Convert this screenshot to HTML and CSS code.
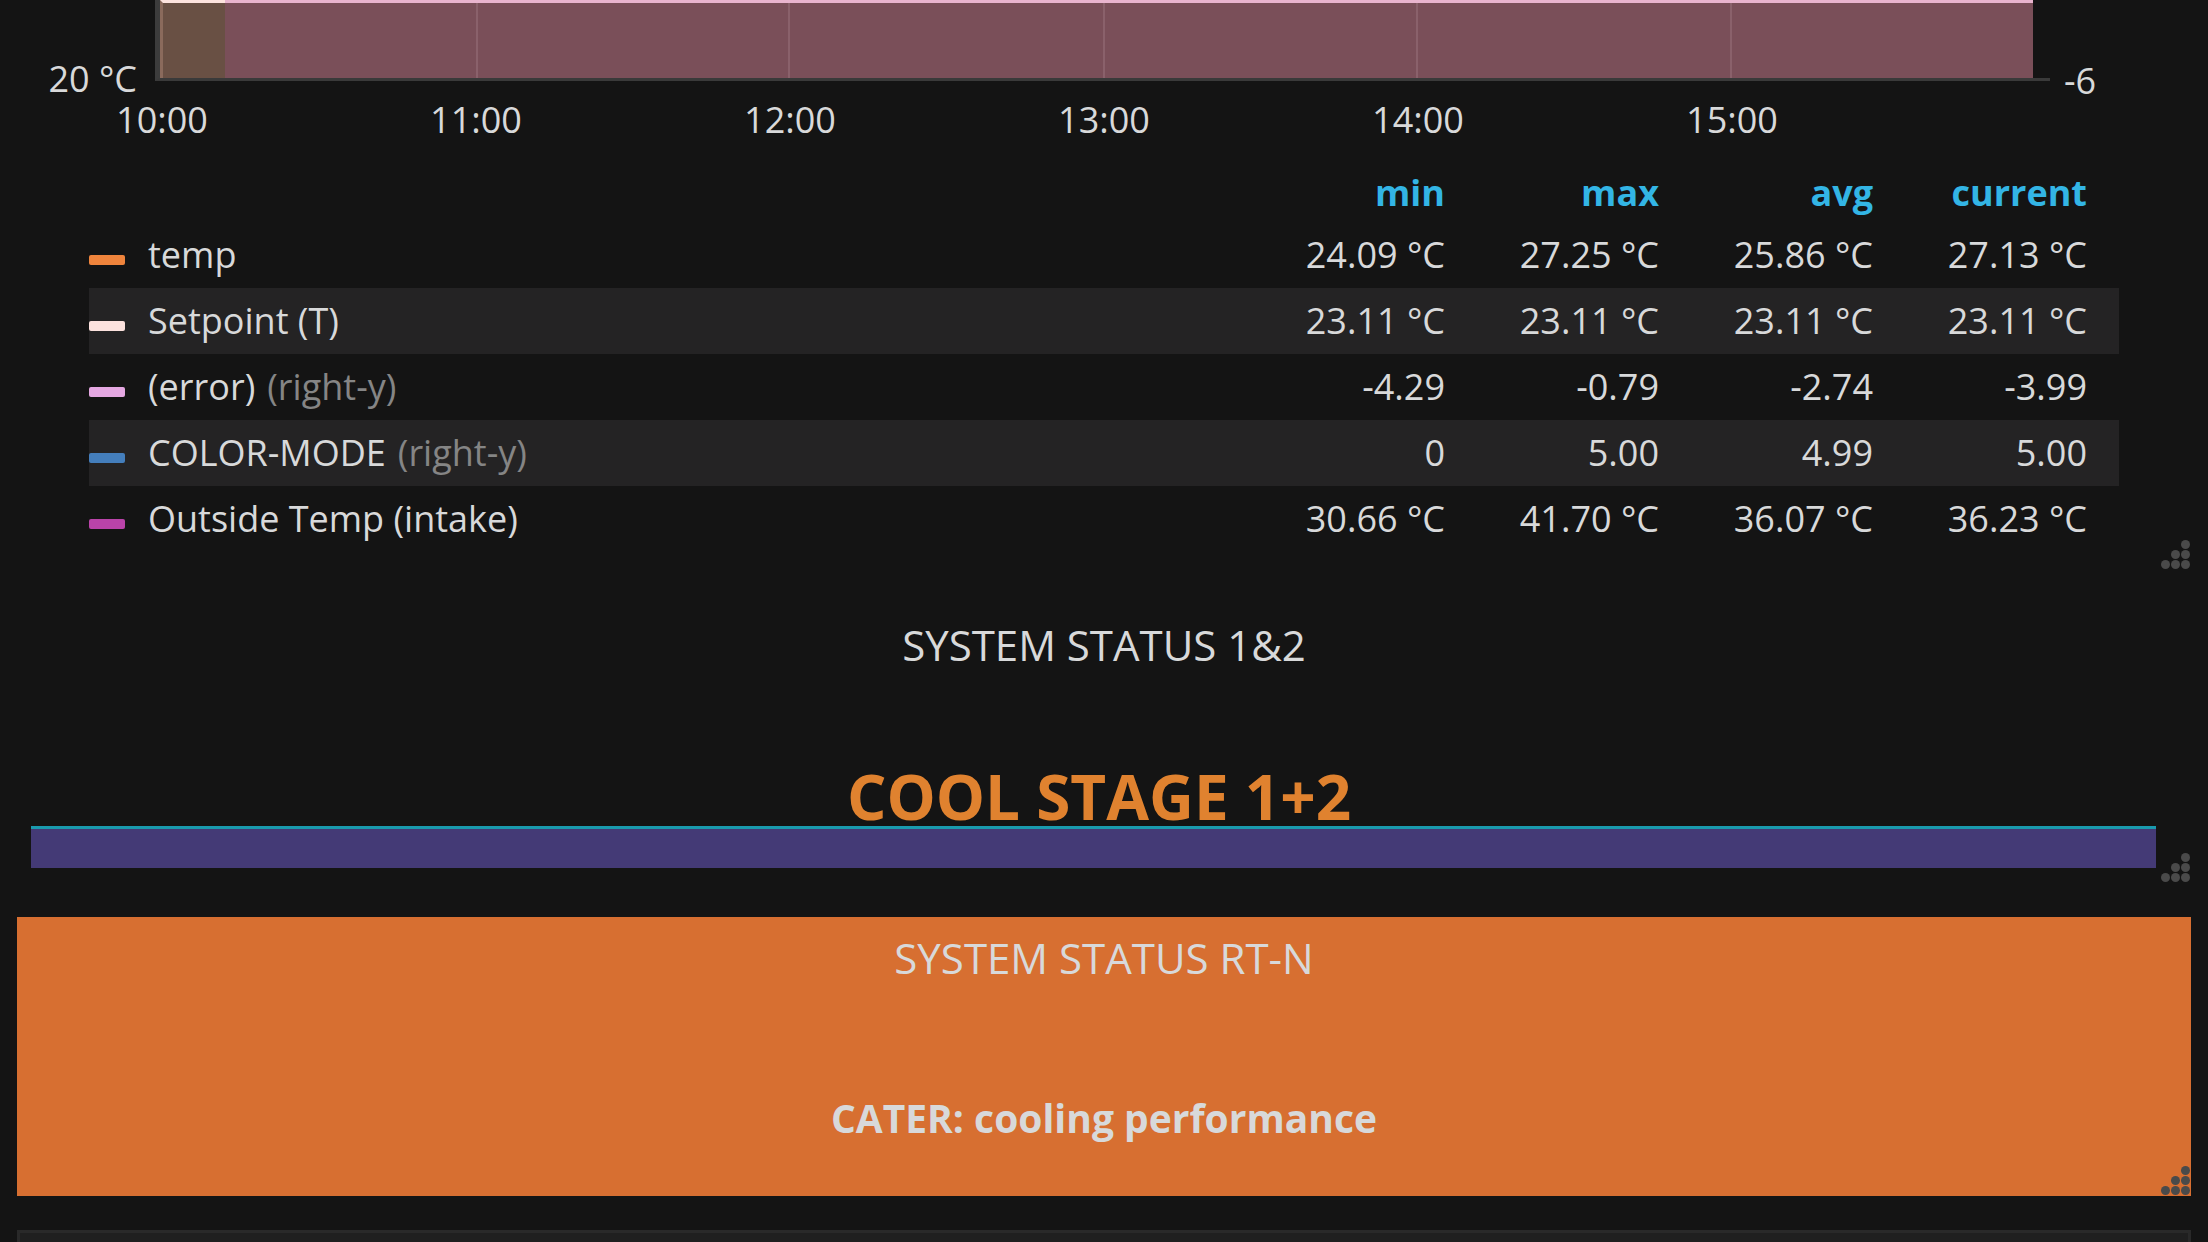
FILE: index.html
```html
<!DOCTYPE html>
<html lang="en">
<head>
<meta charset="utf-8">
<title>Dashboard</title>
<link rel="stylesheet" href="styles.css">
</head>
<body>
<div class="dashboard">
  <section class="panel graph-panel">
    <div class="graph">
      <div class="y-axis y-left">20 °C</div>
      <div class="plot">
        <div class="seg seg-setpoint"></div>
        <div class="seg seg-error"></div>
        <span class="gridline" style="left:316px"></span>
        <span class="gridline" style="left:628px"></span>
        <span class="gridline" style="left:943px"></span>
        <span class="gridline" style="left:1256px"></span>
        <span class="gridline" style="left:1570px"></span>
      </div>
      <div class="tick"></div>
      <div class="y-axis y-right">-6</div>
    </div>
    <div class="x-axis">
      <span>10:00</span><span>11:00</span><span>12:00</span><span>13:00</span><span>14:00</span><span>15:00</span>
    </div>
    <div class="legend">
      <div class="lg-row lg-head"><span></span><span>min</span><span>max</span><span>avg</span><span>current</span></div>
      <div class="lg-row">
        <span class="lg-name"><i class="swatch sw-temp"></i>temp</span>
        <span>24.09 °C</span><span>27.25 °C</span><span>25.86 °C</span><span>27.13 °C</span>
      </div>
      <div class="lg-row alt">
        <span class="lg-name"><i class="swatch sw-setpoint"></i>Setpoint (T)</span>
        <span>23.11 °C</span><span>23.11 °C</span><span>23.11 °C</span><span>23.11 °C</span>
      </div>
      <div class="lg-row">
        <span class="lg-name"><i class="swatch sw-error"></i>(error)<em class="axis-note">(right-y)</em></span>
        <span>-4.29</span><span>-0.79</span><span>-2.74</span><span>-3.99</span>
      </div>
      <div class="lg-row alt">
        <span class="lg-name"><i class="swatch sw-mode"></i>COLOR-MODE<em class="axis-note">(right-y)</em></span>
        <span>0</span><span>5.00</span><span>4.99</span><span>5.00</span>
      </div>
      <div class="lg-row">
        <span class="lg-name"><i class="swatch sw-outside"></i>Outside Temp (intake)</span>
        <span>30.66 °C</span><span>41.70 °C</span><span>36.07 °C</span><span>36.23 °C</span>
      </div>
    </div>
    <div class="resize"><i class="off"></i><i class="off"></i><i></i><i class="off"></i><i></i><i></i><i></i><i></i><i></i></div>
  </section>

  <section class="panel stat-panel">
    <h2 class="title">SYSTEM STATUS 1&amp;2</h2>
    <div class="stat-value">COOL STAGE 1+2</div>
    <div class="spark"></div>
    <div class="resize"><i class="off"></i><i class="off"></i><i></i><i class="off"></i><i></i><i></i><i></i><i></i><i></i></div>
  </section>

  <section class="panel stat-panel orange">
    <h2 class="title">SYSTEM STATUS RT-N</h2>
    <div class="stat-text">CATER: cooling performance</div>
    <div class="resize"><i class="off"></i><i class="off"></i><i></i><i class="off"></i><i></i><i></i><i></i><i></i><i></i></div>
  </section>

  <section class="panel next-panel"></section>
</div>
</body>
</html>
```

FILE: styles.css
```css
html, body {
  margin: 0;
  padding: 0;
  background: #141414;
  color: #d8d9da;
  font-family: "Open Sans", "Liberation Sans", sans-serif;
  overflow: hidden;
}

.dashboard {
  width: 2174px;
  padding: 0 17px;
}

.panel {
  position: relative;
  box-sizing: border-box;
}

/* ---------- graph panel ---------- */
.graph-panel {
  height: 570px;
}

.graph {
  display: flex;
  height: 81px;
}

.y-axis {
  font-size: 36px;
  line-height: 36px;
  align-self: flex-end;
  margin-bottom: -16px;
  white-space: nowrap;
}

.y-left {
  width: 138px;
  box-sizing: border-box;
  padding-right: 18px;
  text-align: right;
  flex: none;
}

.plot {
  position: relative;
  flex: none;
  width: 1878px;
  box-sizing: border-box;
  display: flex;
  border-left: 5px solid #3c3c3c;
  border-bottom: 3px solid #3a3a3a;
}

.seg {
  border-top: 3px solid #e9b4ce;
}

.seg-setpoint {
  width: 62px;
  border-left: 3px solid #8a6a5c;
  border-top-color: #fde3de;
  background: #695044;
}

.seg-error {
  flex: 1;
  background: #7a4f59;
}

.gridline {
  position: absolute;
  top: 3px;
  bottom: 0;
  width: 2px;
  background: #8a616b;
}

.tick {
  flex: none;
  width: 17px;
  height: 3px;
  align-self: flex-end;
  background: #3a3a3a;
}

.y-right {
  margin-left: 14px;
  margin-bottom: -18px;
}

.x-axis {
  display: grid;
  grid-template-columns: repeat(6, 314px);
  justify-items: center;
  margin: 21px 0 0 -12px;
  font-size: 36px;
  line-height: 36px;
}

/* ---------- legend ---------- */
.legend {
  width: 2030px;
  margin: 25px 0 0 72px;
}

.lg-row {
  display: grid;
  grid-template-columns: 1fr repeat(4, 214px);
  align-items: center;
  box-sizing: border-box;
  height: 66px;
  padding-right: 32px;
  font-size: 36px;
  line-height: 44px;
  text-align: right;
}

.lg-row.alt {
  background: #242324;
}

.lg-head {
  height: 59px;
  font-weight: 700;
  color: #33b5e5;
}

.lg-name {
  display: flex;
  align-items: center;
  text-align: left;
  white-space: nowrap;
}

.swatch {
  display: block;
  flex: none;
  width: 36px;
  height: 10px;
  border-radius: 2px;
  margin: 9px 23px 0 0;
}

.sw-temp { background: #ef843c; }
.sw-setpoint { background: #fce2de; }
.sw-error { background: #e5a8e2; }
.sw-mode { background: #447ebc; }
.sw-outside { background: #ba43a9; }

.axis-note {
  font-style: normal;
  color: #858585;
  margin-left: 12px;
}

/* ---------- resize handle ---------- */
.resize {
  position: absolute;
  right: 1px;
  bottom: 1px;
  display: grid;
  grid-template-columns: repeat(3, 9px);
  grid-auto-rows: 9px;
  gap: 1px;
}

.resize i {
  display: block;
  border-radius: 50%;
  background: #4a4a4a;
}

.resize i.off {
  background: transparent;
}

/* ---------- singlestat panels ---------- */
.stat-panel {
  height: 279px;
  margin-top: 34px;
  padding-top: 17px;
  text-align: center;
}

.title {
  margin: 0;
  font-size: 42px;
  line-height: 48px;
  font-weight: 400;
}

.stat-value {
  margin-top: 99px;
  padding-right: 10px;
  font-size: 62px;
  line-height: 56px;
  font-weight: 700;
  color: #e0822f;
}

.spark {
  margin: 2px 35px 0 14px;
  height: 39px;
  border-top: 3px solid #1a9aae;
  background: #443a76;
}

.orange {
  background: #d76f31;
}

.stat-text {
  margin-top: 112px;
  font-size: 39px;
  line-height: 48px;
  font-weight: 700;
}

.next-panel {
  height: 200px;
  margin-top: 34px;
  border: 3px solid #292929;
  background: #1f1f1f;
}
```
